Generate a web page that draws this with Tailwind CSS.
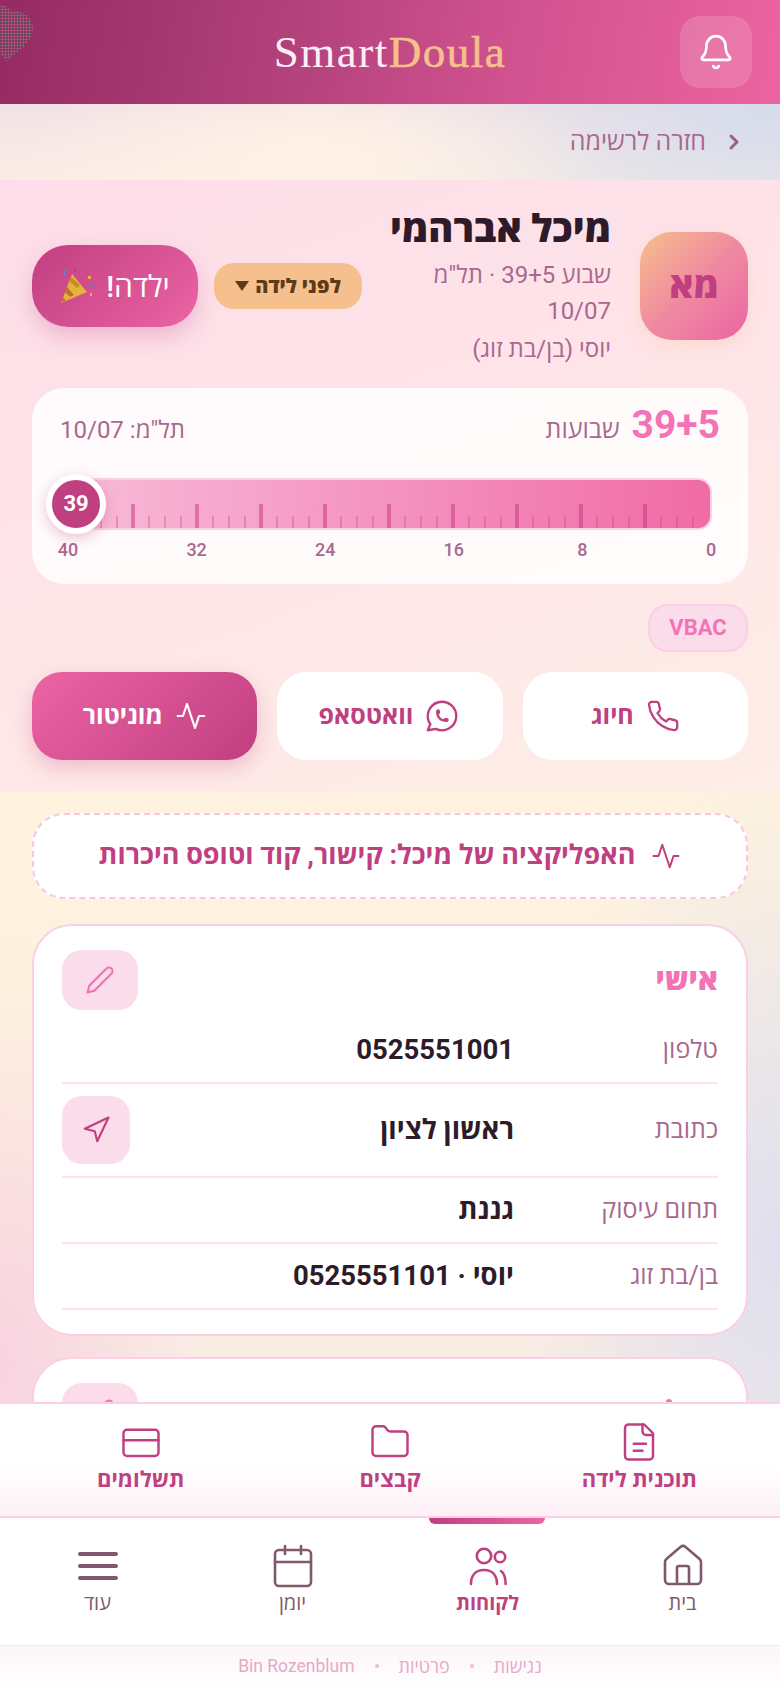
<!DOCTYPE html>
<html lang="he" dir="rtl">
<head>
<meta charset="utf-8">
<title>SmartDoula</title>
<script src="https://cdn.jsdelivr.net/npm/@tailwindcss/browser@4"></script>
</head>
<body class="font-['Roboto','Open_Sans',sans-serif] text-[#2d1b2a]">
<div class="relative flex h-[1688px] w-[780px] flex-col overflow-hidden bg-white">

    <!-- header -->
    <header class="relative flex h-[104px] shrink-0 items-center justify-center bg-[linear-gradient(100deg,#952a62_0%,#b0407a_35%,#d0528f_65%,#ec649f_100%)]">
        <svg class="absolute left-0 top-[4px]" width="36" height="58" viewBox="0 0 36 58">
            <defs>
                <pattern id="dots" width="3" height="3" patternUnits="userSpaceOnUse">
                    <rect width="3" height="3" fill="#b0487c"/>
                    <rect width="2" height="2" fill="#5f4658"/>
                </pattern>
            </defs>
            <path d="M0 2 C6 0 10 6 13 8 C20 6 32 10 33 24 C33 38 18 48 7 57 C4 54 0 50 0 48 Z" fill="url(#dots)"/>
        </svg>
        <div dir="ltr" class="font-['Liberation_Serif',serif] text-[45px] leading-none tracking-[1.5px] text-[#fdeef5]">Smart<span class="text-[#f6c08c] [-webkit-text-stroke:0.6px_#f6c08c]">Doula</span></div>
        <button class="absolute right-[28px] top-[16px] flex h-[72px] w-[72px] items-center justify-center rounded-[20px] bg-white/15">
            <svg width="38" height="38" viewBox="0 0 24 24" fill="none" stroke="white" stroke-width="1.7" stroke-linecap="round" stroke-linejoin="round">
                <path d="M10.268 21a2 2 0 0 0 3.464 0"/>
                <path d="M3.262 15.326A1 1 0 0 0 4 17h16a1 1 0 0 0 .74-1.673C19.41 13.956 18 12.499 18 8A6 6 0 0 0 6 8c0 4.499-1.411 5.956-2.738 7.326"/>
            </svg>
        </button>
    </header>

    <!-- scrolling content -->
    <main class="min-h-0 flex-1 overflow-hidden bg-[radial-gradient(ellipse_300px_90px_at_40%_4%,#fff3e6_0%,transparent_100%),radial-gradient(ellipse_420px_220px_at_100%_0%,#d5dcec_0%,transparent_100%),radial-gradient(ellipse_200px_380px_at_0%_97%,#f9d3e0_0%,transparent_100%),radial-gradient(ellipse_260px_480px_at_100%_88%,#dfdfee_0%,transparent_100%),linear-gradient(180deg,#f3e1e6_0%,#fdf1e4_8%,#fff3de_60%,#f8ece4_100%)]">
        <a class="flex h-[76px] items-center gap-[16px] pr-[34px] text-[25px] text-[#a8688f]">
            <svg width="24" height="24" viewBox="0 0 24 24" fill="none" stroke="#9c5f85" stroke-width="3" stroke-linecap="round" stroke-linejoin="round"><path d="m9 18 6-6-6-6"/></svg>
            <span>חזרה לרשימה</span>
        </a>

        <!-- client header -->
        <section class="bg-[linear-gradient(160deg,#fddde9_0%,#fee3e8_40%,#fdeee6_100%)] px-[32px] pb-[32px] pt-[25px]">
            <div class="flex items-center gap-[16px]">
                <div class="ml-[13px] flex h-[108px] w-[108px] shrink-0 items-center justify-center rounded-[32px] bg-[linear-gradient(135deg,#f6c08c_0%,#f08aa0_50%,#ec64a4_100%)] text-[36px] font-extrabold text-[#c03f80] shadow-[0_6px_16px_rgba(246,192,140,0.25)]">מא</div>
                <div class="min-w-0 flex-1">
                    <h1 class="text-[38px] font-extrabold leading-[48px]">מיכל אברהמי</h1>
                    <p class="mt-[4px] text-[24px] leading-[36px] text-[#a8688f]">שבוע 39+5 · תל"מ 10/07</p>
                    <p class="mt-[2px] text-[24px] leading-[36px] text-[#a8688f]">יוסי (בן/בת זוג)</p>
                </div>
                <button class="flex h-[46px] w-[148px] shrink-0 items-center justify-center gap-[6px] rounded-[20px] bg-[#f6c08e] text-[20px] font-extrabold text-[#5c3a1a]">
                    <span>לפני לידה</span>
                    <svg width="14" height="10" viewBox="0 0 14 10"><polygon points="0,0 14,0 7,10" fill="#5c3a1a"/></svg>
                </button>
                <button class="flex h-[82px] w-[166px] shrink-0 items-center justify-center gap-[12px] rounded-[36px] bg-[linear-gradient(135deg,#c03f80_0%,#ec64a4_100%)] text-[30px] font-medium text-white shadow-[0_10px_22px_rgba(192,63,128,0.25)]">
                    <span>ילדה!</span>
                    <svg width="34" height="36" viewBox="0 0 34 36">
                        <polygon points="1,35 12,6 27,24" fill="#e8b23a"/>
                        <polygon points="7,19 14,27 10,29 5,24" fill="#b8742a"/>
                        <polygon points="11,9 20,17 17,20 9,13" fill="#c98a2c"/>
                        <polygon points="3,29 6,33 3,34 1,33" fill="#b8742a"/>
                        <rect x="20" y="3" width="3" height="3" fill="#d0528f"/>
                        <rect x="28" y="8" width="3" height="3" fill="#e8b23a"/>
                        <rect x="4" y="2" width="2" height="6" fill="#6a7ad0"/>
                        <rect x="29" y="17" width="5" height="2" fill="#6a7ad0"/>
                        <rect x="24" y="27" width="2" height="2" fill="#d0528f"/>
                        <rect x="30" y="25" width="2" height="3" fill="#e8b23a"/>
                        <rect x="14" y="1" width="2" height="3" fill="#c03f80"/>
                    </svg>
                </button>
            </div>

            <!-- pregnancy progress -->
            <div class="mt-[21px] rounded-[32px] bg-white/85 px-[28px] pb-[22px] pt-[15px]">
                <div class="flex items-end justify-between">
                    <div class="flex items-baseline gap-[12px]">
                        <span dir="ltr" class="text-[39px] font-bold leading-[44px] text-[#f472b6]">39+5</span>
                        <span class="text-[25px] text-[#a8688f]">שבועות</span>
                    </div>
                    <span class="pb-[1px] text-[24px] text-[#a8688f]">תל"מ: 10/07</span>
                </div>
                <div class="relative mr-[8px] mt-[29px]">
                    <div dir="ltr" id="ticks" class="flex h-[52px] items-end overflow-hidden rounded-[14px] border-2 border-[#fbcfe4] bg-[linear-gradient(90deg,#f8bcd8_0%,#f59bc5_40%,#f06ba5_100%)] pl-[7px]"></div>
                    <div class="absolute left-[-14px] top-[-4px] flex h-[60px] w-[60px] items-center justify-center rounded-full border-[6px] border-white bg-[#c03f80] text-[22px] font-bold text-white shadow-[0_4px_14px_rgba(192,63,128,0.3)]">39</div>
                </div>
                <div class="-ml-[4px] -mr-[3px] mt-[8px] flex justify-between text-[18px] font-medium leading-[24px] text-[#a8688f]">
                    <span class="w-[24px] text-center">0</span>
                    <span class="w-[24px] text-center">8</span>
                    <span class="w-[24px] text-center">16</span>
                    <span class="w-[24px] text-center">24</span>
                    <span class="w-[24px] text-center">32</span>
                    <span class="w-[24px] text-center">40</span>
                </div>
            </div>

            <div class="mt-[20px] flex">
                <span class="flex h-[48px] w-[100px] items-center justify-center rounded-[20px] border-2 border-[#fbcfe4] bg-[#fbdcea] text-[22px] font-bold text-[#f472b6]">VBAC</span>
            </div>

            <div class="mt-[20px] grid grid-cols-3 gap-[20px]">
                <button class="flex h-[88px] items-center justify-center gap-[12px] rounded-[30px] bg-white text-[25px] font-bold text-[#c03f80]">
                    <svg width="34" height="34" viewBox="0 0 24 24" fill="none" stroke="currentColor" stroke-width="1.6" stroke-linecap="round" stroke-linejoin="round"><path d="M22 16.92v3a2 2 0 0 1-2.18 2 19.79 19.79 0 0 1-8.63-3.07 19.5 19.5 0 0 1-6-6 19.79 19.79 0 0 1-3.07-8.67A2 2 0 0 1 4.11 2h3a2 2 0 0 1 2 1.72 12.84 12.84 0 0 0 .7 2.81 2 2 0 0 1-.45 2.11L8.09 9.91a16 16 0 0 0 6 6l1.27-1.27a2 2 0 0 1 2.11-.45 12.84 12.84 0 0 0 2.81.7A2 2 0 0 1 22 16.92z"/></svg>
                    <span>חיוג</span>
                </button>
                <button class="flex h-[88px] items-center justify-center gap-[10px] rounded-[30px] bg-white text-[25px] font-bold text-[#c03f80]">
                    <svg width="38" height="38" viewBox="0 0 24 24" fill="none" stroke="currentColor" stroke-width="1.5" stroke-linecap="round" stroke-linejoin="round"><path d="M3 21l1.65-3.8a9 9 0 1 1 3.4 2.9L3 21"/><path d="M9 10a.5.5 0 0 0 1 0V9a.5.5 0 0 0-1 0v1a5 5 0 0 0 5 5h1a.5.5 0 0 0 0-1h-1a.5.5 0 0 0 0 1"/></svg>
                    <span>וואטסאפ</span>
                </button>
                <button class="flex h-[88px] items-center justify-center gap-[12px] rounded-[30px] bg-[linear-gradient(135deg,#ec64a4_0%,#c03f80_100%)] text-[25px] font-bold text-white shadow-[0_8px_20px_rgba(192,63,128,0.25)]">
                    <svg width="32" height="32" viewBox="0 0 24 24" fill="none" stroke="currentColor" stroke-width="1.6" stroke-linecap="round" stroke-linejoin="round"><path d="M22 12h-4l-3 9L9 3l-3 9H2"/></svg>
                    <span>מוניטור</span>
                </button>
            </div>
        </section>

        <div class="px-[32px] pt-[21px]">
            <button class="flex h-[86px] w-full items-center justify-center gap-[16px] rounded-[32px] border-2 border-dashed border-[#f9c6de] bg-white text-[27px] font-bold text-[#c03f80]">
                <svg width="30" height="30" viewBox="0 0 24 24" fill="none" stroke="currentColor" stroke-width="1.6" stroke-linecap="round" stroke-linejoin="round"><path d="M22 12h-4l-3 9L9 3l-3 9H2"/></svg>
                <span>האפליקציה של מיכל: קישור, קוד וטופס היכרות</span>
            </button>

            <!-- personal card -->
            <section class="mt-[25px] rounded-[40px] border-2 border-[#fbcfe4] bg-white px-[28px] py-[24px]">
                <div class="flex h-[60px] items-center justify-between">
                    <h2 class="text-[30px] font-extrabold text-[#f472b6]">אישי</h2>
                    <button class="flex h-[60px] w-[76px] items-center justify-center rounded-[20px] bg-[#fbdcea]">
                        <svg width="30" height="30" viewBox="0 0 24 24" fill="none" stroke="#f472b6" stroke-width="1.7" stroke-linecap="round" stroke-linejoin="round"><path d="M17 3a2.85 2.83 0 1 1 4 4L7.5 20.5 2 22l1.5-5.5Z"/></svg>
                    </button>
                </div>
                <div class="mt-[8px] flex h-[66px] items-center border-b-2 border-[#fce4ef]">
                    <span class="w-[204px] shrink-0 text-[25px] text-[#a8688f]">טלפון</span>
                    <span class="text-[27.5px] font-bold">0525551001</span>
                </div>
                <div class="flex h-[94px] items-center border-b-2 border-[#fce4ef]">
                    <span class="w-[204px] shrink-0 text-[25px] text-[#a8688f]">כתובת</span>
                    <span class="flex-1 text-[27.5px] font-bold">ראשון לציון</span>
                    <button class="flex h-[68px] w-[68px] items-center justify-center rounded-[20px] bg-[#fbdcea]">
                        <svg width="30" height="30" viewBox="0 0 24 24" fill="none" stroke="#c03f80" stroke-width="1.7" stroke-linecap="round" stroke-linejoin="round"><polygon points="3 11 22 2 13 21 11 13 3 11"/></svg>
                    </button>
                </div>
                <div class="flex h-[66px] items-center border-b-2 border-[#fce4ef]">
                    <span class="w-[204px] shrink-0 text-[25px] text-[#a8688f]">תחום עיסוק</span>
                    <span class="text-[27.5px] font-bold">גננת</span>
                </div>
                <div class="flex h-[66px] items-center border-b-2 border-[#fce4ef]">
                    <span class="w-[204px] shrink-0 text-[25px] text-[#a8688f]">בן/בת זוג</span>
                    <span class="text-[27.5px] font-bold">יוסי · 0525551101</span>
                </div>
            </section>

            <!-- next card, mostly behind the bottom sheet -->
            <section class="mt-[21px] rounded-[40px] border-2 border-[#fbcfe4] bg-white px-[28px] py-[24px]">
                <div class="flex h-[60px] items-start justify-between">
                    <span class="mr-[46px] mt-[16px] h-[8px] w-[6px] rounded-t-full bg-[#f472b6]"></span>
                    <button class="flex h-[60px] w-[76px] items-center justify-center rounded-[20px] bg-[#fbdcea]">
                        <svg width="30" height="30" viewBox="0 0 24 24" fill="none" stroke="#f472b6" stroke-width="1.7" stroke-linecap="round" stroke-linejoin="round"><path d="M17 3a2.85 2.83 0 1 1 4 4L7.5 20.5 2 22l1.5-5.5Z"/></svg>
                    </button>
                </div>
            </section>
        </div>
    </main>

    <!-- quick links sheet -->
    <nav class="grid h-[116px] shrink-0 grid-cols-3 border-y-2 border-[#fbcfe4] bg-[linear-gradient(180deg,#ffffff_55%,#fdf0f6_100%)] px-[16px] text-[#c03f80]">
        <a class="flex flex-col items-center pt-[17px]">
            <svg width="42" height="42" viewBox="0 0 24 24" fill="none" stroke="currentColor" stroke-width="1.4" stroke-linecap="round" stroke-linejoin="round"><path d="M15 2H6a2 2 0 0 0-2 2v16a2 2 0 0 0 2 2h12a2 2 0 0 0 2-2V7Z"/><path d="M14 2v4a2 2 0 0 0 2 2h4"/><path d="M16 13H9"/><path d="M14 17H9"/></svg>
            <span class="mt-[4px] text-[22px] font-bold leading-[26px]">תוכנית לידה</span>
        </a>
        <a class="flex flex-col items-center pt-[17px]">
            <svg width="42" height="42" viewBox="0 0 24 24" fill="none" stroke="currentColor" stroke-width="1.4" stroke-linecap="round" stroke-linejoin="round"><path d="M20 20a2 2 0 0 0 2-2V8a2 2 0 0 0-2-2h-7.9a2 2 0 0 1-1.69-.9L9.6 3.9A2 2 0 0 0 7.93 3H4a2 2 0 0 0-2 2v13a2 2 0 0 0 2 2Z"/></svg>
            <span class="mt-[4px] text-[22px] font-bold leading-[26px]">קבצים</span>
        </a>
        <a class="flex flex-col items-center pt-[17px]">
            <svg width="44" height="42" viewBox="0 0 24 24" fill="none" stroke="currentColor" stroke-width="1.4" stroke-linecap="round" stroke-linejoin="round"><rect x="2" y="5" width="20" height="15" rx="2"/><path d="M2 11h20"/></svg>
            <span class="mt-[4px] text-[22px] font-bold leading-[26px]">תשלומים</span>
        </a>
    </nav>

    <!-- main nav -->
    <nav class="relative grid h-[127px] shrink-0 grid-cols-4 bg-white text-[#80596e]">
        <a class="flex flex-col items-center pt-[24px]">
            <svg width="48" height="48" viewBox="0 0 24 24" fill="none" stroke="currentColor" stroke-width="1.3" stroke-linecap="round" stroke-linejoin="round"><path d="M15 21v-8a1 1 0 0 0-1-1h-4a1 1 0 0 0-1 1v8"/><path d="M3 10a2 2 0 0 1 .709-1.528l7-5.999a2 2 0 0 1 2.582 0l7 5.999A2 2 0 0 1 21 10v9a2 2 0 0 1-2 2H5a2 2 0 0 1-2-2z"/></svg>
            <span class="mt-[1px] text-[20px] font-medium leading-[24px]">בית</span>
        </a>
        <a class="relative flex flex-col items-center pt-[24px] text-[#c03f80]">
            <span class="absolute right-[40px] top-0 h-[6px] w-[116px] rounded-b-[6px] bg-[linear-gradient(90deg,#c03f80,#ec64a4)]"></span>
            <svg width="48" height="48" viewBox="0 0 24 24" fill="none" stroke="currentColor" stroke-width="1.3" stroke-linecap="round" stroke-linejoin="round"><circle cx="10" cy="7" r="3.6"/><circle cx="18" cy="7.500" r="2.600"/><path d="M3.500 21c0-4.500 2.500-7 6.500-7s6.500 2.500 6.500 7"/><path d="M18.500 14.500c1.500 1 2.300 3.300 2.300 6.500"/></svg>
            <span class="mt-[1px] text-[20px] font-bold leading-[24px]">לקוחות</span>
        </a>
        <a class="flex flex-col items-center pt-[24px]">
            <svg width="48" height="48" viewBox="0 0 24 24" fill="none" stroke="currentColor" stroke-width="1.3" stroke-linecap="round" stroke-linejoin="round"><path d="M8 2v4"/><path d="M16 2v4"/><rect x="3" y="4" width="18" height="18" rx="2"/><path d="M3 10h18"/></svg>
            <span class="mt-[1px] text-[20px] font-medium leading-[24px]">יומן</span>
        </a>
        <a class="flex flex-col items-center pt-[24px]">
            <svg width="48" height="48" viewBox="0 0 24 24" fill="none" stroke="currentColor" stroke-width="2" stroke-linecap="round"><path d="M3 6h18"/><path d="M3 12h18"/><path d="M3 18h18"/></svg>
            <span class="mt-[1px] text-[20px] font-medium leading-[24px]">עוד</span>
        </a>
    </nav>

    <!-- footer -->
    <footer class="flex h-[43px] shrink-0 items-center justify-center gap-[20px] border-t border-[#fce4ef] bg-[linear-gradient(180deg,#fdf5f9,#ffffff)] pb-[2px] text-[18px] text-[#e9a8c8]">
        <span>נגישות</span>
        <span class="h-[4px] w-[4px] rounded-full bg-[#f3b9d3]"></span>
        <span>פרטיות</span>
        <span class="h-[4px] w-[4px] rounded-full bg-[#f3b9d3]"></span>
        <span class="text-[17.5px]">Bin Rozenblum</span>
    </footer>
</div>

<script>
// week ruler ticks
const ticks = document.getElementById('ticks');
for (let i = 0; i < 40; i++) {
    const cell = document.createElement('div');
    cell.className = 'w-4 shrink-0';
    const tick = document.createElement('div');
    tick.className = i % 4 === 0
        ? 'ml-[-2px] h-[24px] w-[4px] bg-[#c8347f]/50'
        : 'ml-[-1px] h-[12px] w-[2px] bg-[#d8407f]/35';
    cell.appendChild(tick);
    ticks.appendChild(cell);
}
</script>
</body>
</html>
